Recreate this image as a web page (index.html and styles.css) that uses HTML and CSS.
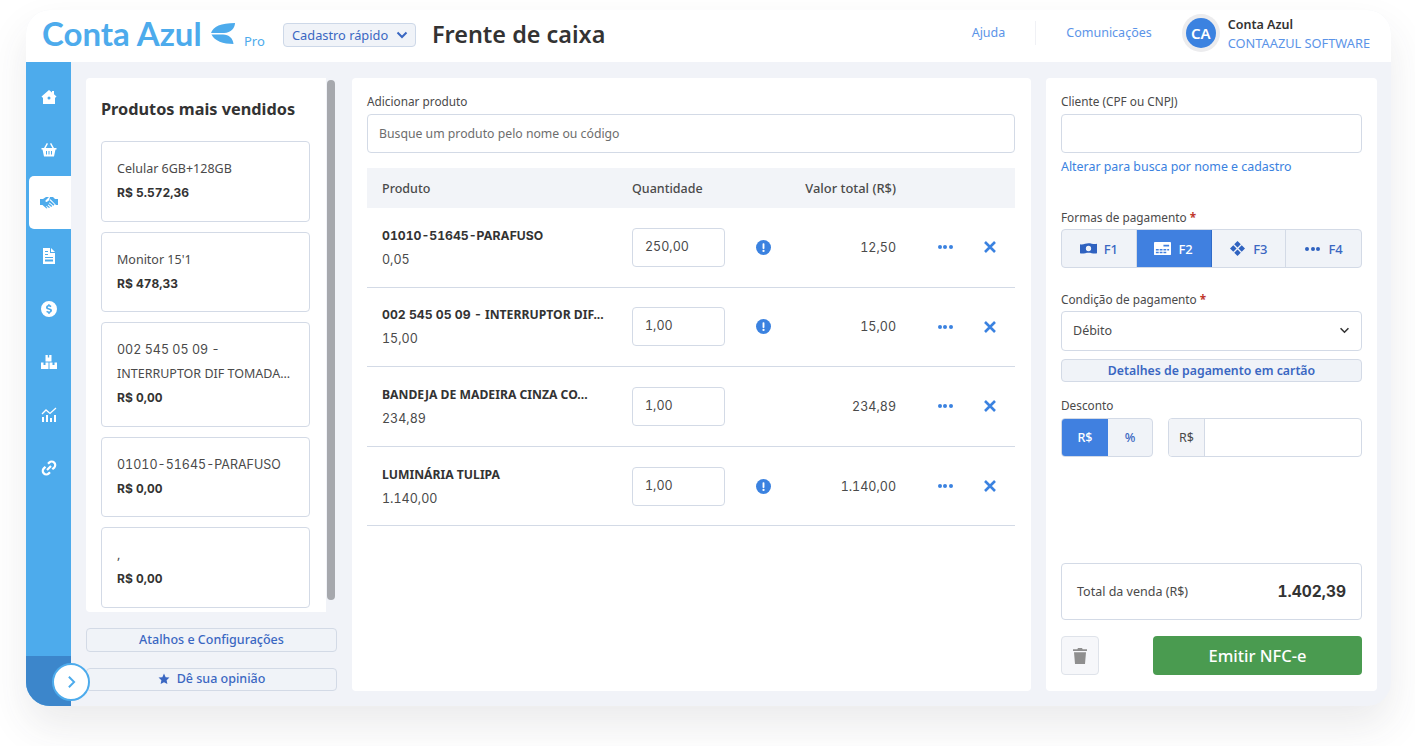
FILE: index.html
```html
<!DOCTYPE html>
<html lang="pt-BR">
<head>
  <meta charset="UTF-8">
  <title>Frente de caixa</title>
  <link rel="stylesheet" href="styles.css">
</head>
<body>
  <div class="app">
    <header class="topbar">
      <div class="logo">
        <span class="logo-text">Conta Azul</span>
        <svg class="logo-leaf" viewBox="0 0 24 21"><path d="M0 10C2 3.500 10 0 24 0c0 5-4 9.500-11 10z"/><path d="M.5 11.500H12c6 0 10 4 10.500 9.500C12 21 3.500 18 .5 11.500z"/></svg>
        <span class="logo-pro">Pro</span>
      </div>
      <button class="quick-btn">Cadastro rápido
        <svg viewBox="0 0 12 8"><path d="M1.500 1.500 6 6l4.500-4.500"/></svg>
      </button>
      <h1 class="page-title">Frente de caixa</h1>
      <nav class="topnav">
        <a class="topnav-help">Ajuda</a>
        <span class="topnav-sep"></span>
        <a class="topnav-news">Comunicações</a>
      </nav>
      <div class="account">
        <div class="avatar"><span>CA</span></div>
        <div class="account-info">
          <strong>Conta Azul</strong>
          <span>CONTAAZUL SOFTWARE</span>
        </div>
      </div>
    </header>

    <div class="main">
      <aside class="sidebar">
        <ul class="side-menu">
          <li><svg viewBox="0 0 16 16"><path d="M8 1 .5 7.500l1 1.200L2 8.300V15h12V8.300l.5.400 1-1.200L13 5.300V2h-2v1.600zM8 7.500a1.500 1.500 0 1 1 0 3 1.500 1.500 0 0 1 0-3z" fill-rule="evenodd"/></svg></li>
          <li><svg viewBox="0 0 16 16"><path d="M5.800 1 3 6H.5v1.500h1L3 14.500h10l1.500-7h1V6H13l-2.800-5-1.200.7L11.300 6H4.700L7 1.700zM5 9h1v3.500H5zm2.500 0h1v3.500h-1zM10 9h1v3.500h-1z" fill-rule="evenodd"/></svg></li>
          <li class="active"><svg viewBox="0 0 18 14"><path d="M0 3h3l3-2h3L5.500 4.500c-.6.800.7 2 1.600 1.300L9.500 4l5 4.500-1 1.200-4-3.200-.7.600 3.500 3-1 1-3-2.500-.6.600 2.300 2-1 .9-2.500-2-.5.500 1.500 1.300-1 .6L2.500 9H0zM10 1h3l2 2h3v6h-2L10.500 3.200 9 4.300z"/></svg></li>
          <li><svg viewBox="0 0 16 16"><path d="M2 0h7v5h5v11H2zm8 0 4 4h-4zM4 3v1h3V3zm0 3v1h3V6zm0 3v1h8V9zm0 2.500v2h8v-2z" fill-rule="evenodd"/></svg></li>
          <li><svg viewBox="0 0 16 16"><path d="M8 0a8 8 0 1 1 0 16A8 8 0 0 1 8 0zm-.7 3v1.100C6 4.300 5 5.200 5 6.400c0 2.700 4.200 1.800 4.200 3.300 0 .5-.5.800-1.200.8-.7 0-1.400-.3-2-.8l-.8 1.200c.6.500 1.300.8 2.100 1V13h1.400v-1.100C10 11.700 11 10.800 11 9.600c0-2.800-4.200-1.900-4.200-3.300 0-.5.500-.8 1.100-.8.600 0 1.200.2 1.800.7l.8-1.200c-.6-.5-1.300-.8-2-.9V3z" fill-rule="evenodd"/></svg></li>
          <li><svg viewBox="0 0 16 16"><path d="M4.500 1h2.300v2.500h1.400V1h2.300v6.500h-6zM0 8.500h2.500V11h2V8.500h3V15H0zm8.500 0h3V11h2V8.500H16V15H8.500z" fill-rule="evenodd"/></svg></li>
          <li><svg viewBox="0 0 16 16"><path d="M1 10h2v5H1zm4-2h2v7H5zm4 3h2v4H9zm4-3h2v7h-2z"/><path class="line" d="M1 7l4-4 4 3.500L15 1"/></svg></li>
          <li><svg viewBox="0 0 16 16"><path class="line thick" d="M6 10l4-4M7 3.800l1.200-1.200a3.400 3.400 0 0 1 5 5l-1.900 1.700M9 12.200l-1.200 1.200a3.400 3.400 0 0 1-5-5l1.700-1.700"/></svg></li>
        </ul>
        <div class="side-foot"></div>
      </aside>

      <button class="side-toggle"><svg viewBox="0 0 10 16"><path d="M2 2l6 6-6 6"/></svg></button>

      <div class="content">
        <section class="left-col">
          <div class="best-panel">
            <div class="best-list">
              <h2>Produtos mais vendidos</h2>
              <div class="prod-card"><p>Celular 6GB+128GB</p><b class="num">R$ 5.572,36</b></div>
              <div class="prod-card"><p>Monitor 15'1</p><b class="num">R$ 478,33</b></div>
              <div class="prod-card"><p><span class="num">002 545 05 09 -</span><br>INTERRUPTOR DIF TOMADA...</p><b class="num">R$ 0,00</b></div>
              <div class="prod-card"><p class="num">01010-51645-PARAFUSO</p><b class="num">R$ 0,00</b></div>
              <div class="prod-card"><p>,</p><b class="num">R$ 0,00</b></div>
            </div>
            <div class="scroll-track"><div class="scroll-thumb"></div></div>
          </div>
          <button class="soft-btn shortcut-btn">Atalhos e Configurações</button>
          <button class="soft-btn opinion-btn">
            <svg viewBox="0 0 16 16"><path d="m8 .8 2.200 4.700 5.100.6-3.800 3.500 1 5.100L8 12.200l-4.500 2.500 1-5.100L.7 6.100l5.100-.6z"/></svg>
            Dê sua opinião
          </button>
        </section>

        <section class="panel center-panel">
          <label class="field-label">Adicionar produto</label>
          <input class="text-input search-input" placeholder="Busque um produto pelo nome ou código">

          <div class="table-head tgrid">
            <span>Produto</span>
            <span>Quantidade</span>
            <span></span>
            <span class="head-total">Valor total (R$)</span>
          </div>

          <div class="table-row tgrid">
            <div class="item"><b class="num">01010-51645-PARAFUSO</b><span class="num">0,05</span></div>
            <div class="qty num">250,00</div>
            <div class="cell-center"><svg class="alert" viewBox="0 0 16 16"><circle cx="8" cy="8" r="8"/><rect x="7" y="3.500" width="2" height="6" rx=".8"/><circle class="dot" cx="8" cy="11.700" r="1.200"/></svg></div>
            <div class="value num">12,50</div>
            <div class="dots"><i></i><i></i><i></i></div>
            <div class="remove"><svg viewBox="0 0 12 12"><path d="M1 1l10 10M11 1 1 11"/></svg></div>
          </div>
          <div class="table-row tgrid">
            <div class="item"><b><span class="num">002 545 05 09 -</span> INTERRUPTOR DIF...</b><span class="num">15,00</span></div>
            <div class="qty num">1,00</div>
            <div class="cell-center"><svg class="alert" viewBox="0 0 16 16"><circle cx="8" cy="8" r="8"/><rect x="7" y="3.500" width="2" height="6" rx=".8"/><circle class="dot" cx="8" cy="11.700" r="1.200"/></svg></div>
            <div class="value num">15,00</div>
            <div class="dots"><i></i><i></i><i></i></div>
            <div class="remove"><svg viewBox="0 0 12 12"><path d="M1 1l10 10M11 1 1 11"/></svg></div>
          </div>
          <div class="table-row tgrid">
            <div class="item"><b>BANDEJA DE MADEIRA CINZA CO...</b><span class="num">234,89</span></div>
            <div class="qty num">1,00</div>
            <div class="cell-center"></div>
            <div class="value num">234,89</div>
            <div class="dots"><i></i><i></i><i></i></div>
            <div class="remove"><svg viewBox="0 0 12 12"><path d="M1 1l10 10M11 1 1 11"/></svg></div>
          </div>
          <div class="table-row tgrid">
            <div class="item"><b>LUMINÁRIA TULIPA</b><span class="num">1.140,00</span></div>
            <div class="qty num">1,00</div>
            <div class="cell-center"><svg class="alert" viewBox="0 0 16 16"><circle cx="8" cy="8" r="8"/><rect x="7" y="3.500" width="2" height="6" rx=".8"/><circle class="dot" cx="8" cy="11.700" r="1.200"/></svg></div>
            <div class="value num">1.140,00</div>
            <div class="dots"><i></i><i></i><i></i></div>
            <div class="remove"><svg viewBox="0 0 12 12"><path d="M1 1l10 10M11 1 1 11"/></svg></div>
          </div>
        </section>

        <section class="panel right-panel">
          <label class="field-label">Cliente (CPF ou CNPJ)</label>
          <input class="text-input">
          <a class="switch-link">Alterar para busca por nome e cadastro</a>

          <label class="field-label pay-label">Formas de pagamento <em>*</em></label>
          <div class="pay-tabs">
            <button><svg viewBox="0 0 18 12"><path d="M0 1.500c3 1 6-1 9-1s6 1.500 9 .5v10c-3 1-6-.5-9-.5s-6 1.500-9 .5zM9 3.200a2.800 2.800 0 1 0 0 5.600 2.800 2.800 0 0 0 0-5.600z" fill-rule="evenodd"/></svg>F1</button>
            <button class="on"><svg viewBox="0 0 18 14"><path d="M1 0h16a1 1 0 0 1 1 1v12a1 1 0 0 1-1 1H1a1 1 0 0 1-1-1V1a1 1 0 0 1 1-1zm9 3v2h6V3zM2 7.500v1.500h3V7.500zm4 0v1.500h3V7.500zm4 0v1.500h3V7.500zm4 0v1.500h2V7.500zM2 10.500V12h3v-1.500zm4 0V12h3v-1.500zm4 0V12h3v-1.500z" fill-rule="evenodd"/></svg>F2</button>
            <button><svg viewBox="0 0 16 16"><path d="M8 0l3.500 3.500L8 7 4.500 3.500zM3.500 4.500 7 8l-3.500 3.500L0 8zm9 0L16 8l-3.500 3.500L9 8zM8 9l3.500 3.500L8 16l-3.500-3.500z"/></svg>F3</button>
            <button><span class="dots tab-dots"><i></i><i></i><i></i></span>F4</button>
          </div>

          <label class="field-label cond-label">Condição de pagamento <em>*</em></label>
          <div class="text-input select-box">Débito
            <svg viewBox="0 0 12 8"><path d="M1.500 1.500 6 6l4.500-4.500"/></svg>
          </div>
          <button class="soft-btn card-btn">Detalhes de pagamento em cartão</button>

          <label class="field-label disc-label">Desconto</label>
          <div class="discount">
            <div class="disc-switch"><button class="on">R$</button><button>%</button></div>
            <div class="disc-input"><span>R$</span><div></div></div>
          </div>

          <div class="total-box"><span>Total da venda (R$)</span><b class="num">1.402,39</b></div>
          <div class="actions">
            <button class="trash-btn"><svg viewBox="0 0 14 16"><path d="M5 0h4l.7 1.300H14V3H0V1.300h4.300zM1 4.200h12L12 16H2z"/></svg></button>
            <button class="emit-btn">Emitir NFC-e</button>
          </div>
        </section>
      </div>
    </div>
  </div>
</body>
</html>
```

FILE: styles.css
```css
* {
  box-sizing: border-box;
}

html,
body {
  margin: 0;
  height: 100%;
  overflow: hidden;
  background: #fff;
}

body {
  padding: 10px 24px 40px 26px;
  font-family: "Noto Sans", Arial, sans-serif;
  font-size: 13px;
  color: #4a4a4a;
}

button {
  font-family: inherit;
  cursor: pointer;
}

/* digits in the original font are wide, Inter is the nearest */
.num {
  font-family: Inter, "Noto Sans", sans-serif;
  font-variant-numeric: tabular-nums;
}

/* frame */
.app {
  position: relative;
  height: 696px;
  border-radius: 24px;
  background: #f1f3f8;
  box-shadow: 0 20px 40px rgba(60, 60, 70, 0.1);
  display: flex;
  flex-direction: column;
  overflow: visible;
}

/* header */
.topbar {
  height: 52px;
  flex: none;
  background: #fff;
  border-radius: 24px 24px 0 0;
  display: flex;
  align-items: center;
  padding: 0 21px 4px 16px;
}

.logo {
  display: flex;
  align-items: center;
  width: 241px;
  color: #4dabec;
}

.logo-text {
  font-family: Lato, sans-serif;
  font-size: 33px;
  font-weight: 700;
  width: 169px;
  padding-bottom: 2px;
  white-space: nowrap;
}

.logo-leaf {
  width: 24px;
  height: 21px;
  margin-top: -1px;
  fill: #4dabec;
}

.logo-pro {
  font-size: 13px;
  margin: 13px 0 0 9px;
}

.quick-btn {
  height: 24px;
  width: 133px;
  margin-top: 1px;
  padding: 0 0 0 8px;
  display: flex;
  align-items: center;
  gap: 8px;
  background: #f0f3f8;
  border: 1px solid #cdd8e8;
  border-radius: 4px;
  color: #3a67c2;
  font-size: 12.800px;
  white-space: nowrap;
}

.quick-btn svg {
  width: 12px;
  height: 8px;
  fill: none;
  stroke: #3a67c2;
  stroke-width: 2;
}

.page-title {
  margin: 0 0 0 16px;
  font-size: 23.400px;
  font-weight: 600;
  color: #333;
  white-space: nowrap;
}

.topnav {
  margin-left: auto;
  margin-bottom: 3px;
  display: flex;
  align-items: center;
  color: #5b94e8;
  font-size: 12.500px;
}

.topnav-sep {
  width: 1px;
  height: 24px;
  background: #f0f1f5;
  margin: 0 30px;
}

.account {
  display: flex;
  align-items: center;
  margin-left: 30px;
}

.avatar {
  width: 38px;
  height: 38px;
  margin-bottom: 3px;
  border-radius: 50%;
  background: #ececee;
  display: flex;
  align-items: center;
  justify-content: center;
}

.avatar span {
  width: 30px;
  height: 30px;
  border-radius: 50%;
  background: #3b82e0;
  color: #fff;
  font-size: 15px;
  font-weight: 600;
  line-height: 30px;
  text-align: center;
}

.account-info {
  margin-left: 8px;
  display: flex;
  flex-direction: column;
  gap: 2px;
  font-size: 12.800px;
  line-height: 17px;
}

.account-info strong {
  color: #333;
  font-weight: 600;
  font-size: 12.500px;
}

.account-info span {
  color: #5b94e8;
}

/* body */
.main {
  flex: 1;
  display: flex;
  min-height: 0;
}

.sidebar {
  width: 45px;
  flex: none;
  background: #4dabec;
  border-radius: 0 0 0 24px;
  display: flex;
  flex-direction: column;
  overflow: hidden;
}

.side-menu {
  list-style: none;
  margin: 0;
  padding: 8px 0 0;
  flex: 1;
}

.side-menu li {
  height: 53px;
  display: flex;
  align-items: center;
  justify-content: center;
}

.side-menu li svg {
  width: 16px;
  height: 16px;
  fill: #fff;
}

.side-menu li.active {
  margin-left: 3px;
  padding-right: 3px;
  background: #fff;
  border-radius: 5px 0 0 5px;
}

.side-menu li.active svg {
  fill: #4dabec;
  width: 18px;
}

.side-menu .line {
  fill: none;
  stroke: #fff;
  stroke-width: 1.300;
}

.side-menu .thick {
  stroke-width: 2.200;
}

.side-foot {
  height: 50px;
  flex: none;
  background: #3c86cb;
}

.side-toggle {
  position: absolute;
  left: 26px;
  top: 653px;
  width: 38px;
  height: 38px;
  padding: 0;
  border-radius: 50%;
  background: #fff;
  border: 2px solid #4dabec;
  z-index: 2;
  display: flex;
  align-items: center;
  justify-content: center;
}

.side-toggle svg {
  width: 9px;
  height: 14px;
  fill: none;
  stroke: #4dabec;
  stroke-width: 2.200;
}

.content {
  flex: 1;
  display: grid;
  grid-template-columns: 251px 679px 331px;
  gap: 15px;
  padding: 16px 14px 15px 15px;
  min-width: 0;
}

.panel {
  background: #fff;
  border-radius: 4px;
  padding: 15px;
  display: flex;
  flex-direction: column;
}

/* left column */
.left-col {
  display: flex;
  flex-direction: column;
}

.best-panel {
  height: 534px;
  display: flex;
  justify-content: space-between;
}

.best-list {
  width: 240px;
  background: #fff;
  border-radius: 4px 0 0 4px;
  padding: 0 15px;
  overflow: hidden;
}

.best-list h2 {
  margin: 20px 0 21px;
  font-size: 16.300px;
  line-height: 22px;
  font-weight: 700;
  color: #333;
  white-space: nowrap;
}

.prod-card {
  border: 1px solid #d3dae6;
  border-radius: 4px;
  padding: 15.250px 15px;
  margin: 0 1px 10px 0;
  background: #fff;
}

.prod-card p {
  margin: 0;
  line-height: 24px;
  font-size: 12.500px;
  white-space: nowrap;
}

.prod-card b {
  display: block;
  font-size: 12px;
  line-height: 24px;
  font-weight: 700;
  color: #333;
}

.scroll-track {
  width: 8px;
  margin-right: 2px;
  padding-top: 2px;
}

.scroll-thumb {
  width: 8px;
  height: 520px;
  border-radius: 4px;
  background: #a6a8ad;
}

.soft-btn {
  background: #f0f3f8;
  border: 1px solid #d3dae6;
  border-radius: 4px;
  color: #3a67c2;
  font-size: 12.500px;
  font-weight: 500;
  padding: 0;
  white-space: nowrap;
}

.shortcut-btn {
  height: 24px;
  margin-top: 16px;
  padding-bottom: 2px;
}

.opinion-btn {
  height: 23px;
  margin-top: 16px;
  padding-bottom: 2px;
  display: flex;
  align-items: center;
  justify-content: center;
  gap: 7px;
}

.opinion-btn svg {
  width: 12px;
  height: 12px;
  fill: #3a67c2;
}

/* center */
.center-panel {
  padding-right: 16px;
}

.field-label {
  display: block;
  font-size: 11.800px;
  line-height: 16px;
  color: #4a4a4a;
  margin-bottom: 5px;
}

.text-input {
  display: block;
  width: 100%;
  height: 39px;
  flex: none;
  padding: 0 11px;
  border: 1px solid #d3dae6;
  border-radius: 4px;
  font-family: inherit;
  font-size: 12.250px;
  color: #4a4a4a;
  outline: none;
  background: #fff;
}

.text-input::placeholder {
  color: #6d6d6d;
  opacity: 1;
}

.tgrid {
  display: grid;
  grid-template-columns: 250px 93px 77px 94px 68px 51px;
  align-items: center;
  padding-left: 15px;
}

.table-head {
  height: 40px;
  margin-top: 15px;
  background: #f2f4f8;
  font-size: 12.500px;
  font-weight: 500;
  flex: none;
}

.head-total {
  justify-self: end;
  white-space: nowrap;
  font-size: 12.900px;
}

.table-row {
  height: 79.600px;
  flex: none;
  border-bottom: 1px solid #d3dae6;
}

.item {
  display: flex;
  flex-direction: column;
  gap: 5px;
  font-size: 12.500px;
  line-height: 19px;
  white-space: nowrap;
}

.item b {
  color: #333;
  font-weight: 700;
  font-size: 12.200px;
}

.qty {
  height: 39px;
  border: 1px solid #d3dae6;
  border-radius: 4px;
  padding: 0 12px;
  line-height: 36px;
  font-size: 12.500px;
}

.cell-center {
  display: flex;
  justify-content: center;
}

.alert {
  width: 15px;
  height: 15px;
  fill: #3b82e0;
}

.alert rect,
.alert .dot {
  fill: #fff;
}

.value {
  text-align: right;
  font-size: 12.500px;
}

.dots {
  justify-self: end;
  width: 38px;
  display: flex;
  justify-content: center;
  gap: 1.500px;
}

.dots i {
  width: 4px;
  height: 4px;
  border-radius: 50%;
  background: #3b82e0;
}

.remove {
  display: flex;
  justify-content: center;
}

.remove svg {
  width: 12px;
  height: 12px;
  fill: none;
  stroke: #3b82e0;
  stroke-width: 2.600;
}

/* right */
.right-panel {
  padding-bottom: 16px;
}

.switch-link {
  margin-top: 5px;
  font-size: 12.400px;
  line-height: 17px;
  color: #3b82e0;
}

.field-label em {
  color: #c0392b;
  font-style: normal;
  font-weight: 700;
}

.pay-label {
  margin-top: 34px;
  margin-bottom: 4px;
}

.pay-tabs {
  display: grid;
  grid-template-columns: repeat(4, 1fr);
  height: 39px;
  flex: none;
  border: 1px solid #d3dae6;
  border-radius: 4px;
  background: #f0f3f8;
  overflow: hidden;
}

.pay-tabs button {
  display: flex;
  align-items: center;
  justify-content: center;
  gap: 7px;
  background: none;
  border: 0;
  border-right: 1px solid #d3dae6;
  color: #3a67c2;
  font-size: 13px;
  font-weight: 500;
  padding: 0;
}

.pay-tabs button:last-child {
  border-right: 0;
}

.pay-tabs svg {
  width: 17px;
  height: 15px;
  fill: #2f62c0;
}

.pay-tabs button.on {
  background: #4080e0;
  color: #fff;
  border-color: #2f6bc8;
}

.pay-tabs button.on svg {
  fill: #fff;
}

.tab-dots {
  width: 17px;
}

.tab-dots i {
  background: #2f62c0;
}

.cond-label {
  margin-top: 23px;
  margin-bottom: 4px;
}

.select-box {
  height: 40px;
  display: flex;
  align-items: center;
  justify-content: space-between;
  padding: 0 11px 1px 11px;
  font-size: 12.500px;
}

.select-box svg {
  width: 11px;
  height: 7px;
  fill: none;
  stroke: #333;
  stroke-width: 1.800;
}

.card-btn {
  height: 23px;
  flex: none;
  margin-top: 8px;
  font-weight: 600;
  font-size: 12.300px;
}

.disc-label {
  margin-top: 15px;
  margin-bottom: 5px;
}

.discount {
  display: flex;
  gap: 15px;
  height: 39px;
  flex: none;
}

.disc-switch {
  display: grid;
  grid-template-columns: 46px 44px;
  border: 1px solid #d3dae6;
  border-radius: 4px;
  background: #f0f3f8;
  overflow: hidden;
}

.disc-switch button {
  background: none;
  border: 0;
  padding: 0;
  color: #3a67c2;
  font-size: 12.500px;
  font-weight: 500;
}

.disc-switch button.on {
  background: #4080e0;
  color: #fff;
}

.disc-input {
  flex: 1;
  display: flex;
  border: 1px solid #d3dae6;
  border-radius: 4px;
  overflow: hidden;
}

.disc-input span {
  width: 36px;
  background: #f2f4f8;
  border-right: 1px solid #d3dae6;
  text-align: center;
  line-height: 37px;
  font-size: 12.500px;
}

.total-box {
  margin-top: auto;
  height: 57px;
  flex: none;
  border: 1px solid #d3dae6;
  border-radius: 4px;
  padding: 0 15px;
  display: flex;
  align-items: center;
  justify-content: space-between;
  font-size: 12.500px;
}

.total-box b {
  font-size: 15.500px;
  font-weight: 700;
  color: #333;
}

.actions {
  display: flex;
  justify-content: space-between;
  margin-top: 16px;
  height: 39px;
  flex: none;
}

.trash-btn {
  width: 38px;
  padding: 0;
  background: #f6f7fa;
  border: 1px solid #dfe3ea;
  border-radius: 4px;
  display: flex;
  align-items: center;
  justify-content: center;
}

.trash-btn svg {
  width: 14px;
  height: 16px;
  fill: #8f8f8f;
}

.emit-btn {
  width: 209px;
  padding: 0;
  background: #4a9b50;
  border: 0;
  border-radius: 4px;
  color: #fff;
  font-size: 16.500px;
  font-weight: 500;
}
```
